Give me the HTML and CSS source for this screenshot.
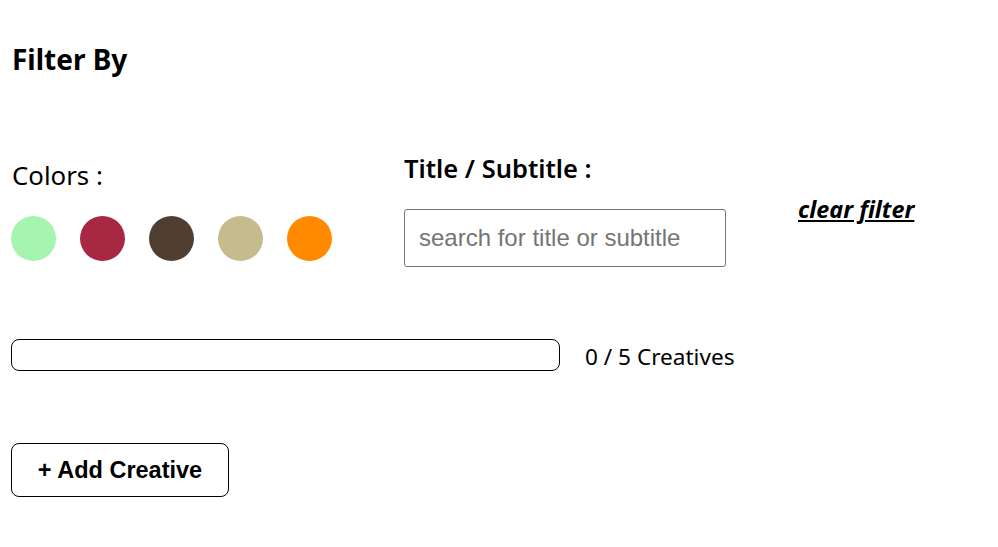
FILE: index.html
```html
<!DOCTYPE html>
<html>
<head>
<meta charset="utf-8">
<link rel="stylesheet" href="styles.css">
</head>
<body>
<div class="page">
  <h2 class="heading">Filter By</h2>
  <div class="filters">
    <div class="colors">
      <div class="colors-label">Colors :</div>
      <div class="swatches">
        <span class="swatch green"></span>
        <span class="swatch crimson"></span>
        <span class="swatch brown"></span>
        <span class="swatch khaki"></span>
        <span class="swatch orange"></span>
      </div>
    </div>
    <div class="title-filter">
      <div class="title-label">Title / Subtitle :</div>
      <input class="search" type="text" placeholder="search for title or subtitle">
    </div>
    <a class="clear" href="#">clear filter</a>
  </div>
  <div class="progress-row">
    <div class="progress"></div>
    <span class="count">0 / 5 Creatives</span>
  </div>
  <button class="add">+ Add Creative</button>
</div>
</body>
</html>
```
FILE: styles.css
```css
html, body {
  margin: 0;
  padding: 0;
  background: #fff;
  color: #000;
}
.page {
  padding: 0 11px;
  font-family: "Noto Sans", "Open Sans", sans-serif;
}
.heading {
  margin: 0;
  padding-top: 40px;
  font-size: 28px;
  font-weight: 700;
  line-height: 38px;
  padding-left: 1px;
}
.filters {
  display: flex;
  align-items: flex-start;
  margin-top: 73px;
}
.colors {
  flex: 0 0 393px;
  padding-top: 8px;
}
.colors-label {
  font-size: 25.8px;
  line-height: 32px;
  padding-left: 1px;
}
.swatches {
  display: flex;
  gap: 24px;
  margin-top: 25px;
}
.swatch {
  width: 45px;
  height: 45px;
  border-radius: 50%;
  display: block;
}
.green { background: #a5f5b0; }
.crimson { background: #a82844; }
.brown { background: #503f30; }
.khaki { background: #c4bc8d; }
.orange { background: #ff8a00; }
.title-filter {
  flex: 0 0 394px;
  padding-top: 1px;
}
.title-label {
  font-size: 25.5px;
  font-weight: 600;
  line-height: 32px;
}
.search {
  display: block;
  box-sizing: border-box;
  width: 322px;
  height: 58px;
  margin-top: 25px;
  padding: 0 14px;
  border: 1px solid #767676;
  border-radius: 3px;
  font-family: "Liberation Sans", Arial, sans-serif;
  font-size: 24px;
  color: #000;
}
.search::placeholder {
  color: #757575;
}
.clear {
  margin-top: 44px;
  font-size: 23.4px;
  font-weight: 700;
  font-style: italic;
  color: #000;
  text-decoration: underline;
  line-height: 28px;
}
.progress-row {
  display: flex;
  align-items: center;
  gap: 25px;
  margin-top: 72px;
}
.progress {
  box-sizing: border-box;
  width: 549px;
  height: 32px;
  border: 1px solid #000;
  border-radius: 8px;
}
.count {
  font-size: 22.6px;
  line-height: 28px;
  padding-top: 4px;
}
.add {
  display: block;
  margin-top: 72px;
  box-sizing: border-box;
  width: 218px;
  height: 54px;
  background: #fff;
  border: 1px solid #000;
  border-radius: 8px;
  font-family: "Liberation Sans", Arial, sans-serif;
  font-size: 23.5px;
  font-weight: 700;
  color: #000;
  padding: 0;
}
```
